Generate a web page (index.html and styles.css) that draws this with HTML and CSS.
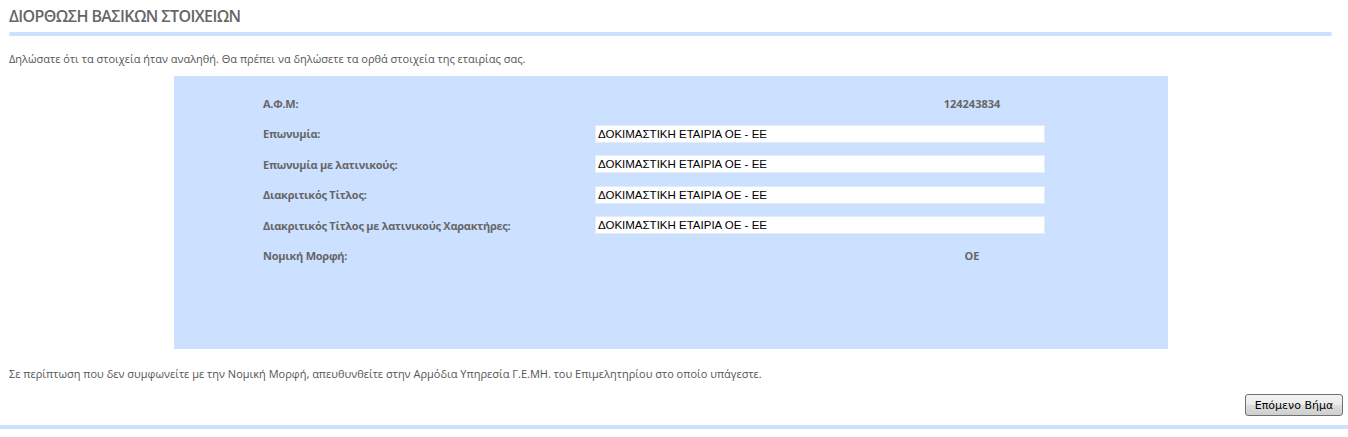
FILE: index.html
```html
<!DOCTYPE html>
<html>
<head>
    <meta charset="utf-8">
    <title>Διόρθωση Βασικών Στοιχείων</title>
    <link rel="stylesheet" href="styles.css">
</head>
<body>
    <div class="page">
        <h1 class="page-title">ΔΙΟΡΘΩΣΗ ΒΑΣΙΚΩΝ ΣΤΟΙΧΕΙΩΝ</h1>
        <div class="title-rule"></div>

        <p class="note intro">Δηλώσατε ότι τα στοιχεία ήταν αναληθή. Θα πρέπει να δηλώσετε τα ορθά στοιχεία της εταιρίας σας.</p>

        <div class="form-box">
            <div class="form-row">
                <label class="form-label">Α.Φ.Μ:</label>
                <span class="static-value">124243834</span>
            </div>
            <div class="form-row">
                <label class="form-label" for="name">Επωνυμία:</label>
                <input class="form-input" id="name" type="text" value="ΔΟΚΙΜΑΣΤΙΚΗ ΕΤΑΙΡΙΑ ΟΕ - ΕΕ">
            </div>
            <div class="form-row">
                <label class="form-label" for="nameLatin">Επωνυμία με λατινικούς:</label>
                <input class="form-input" id="nameLatin" type="text" value="ΔΟΚΙΜΑΣΤΙΚΗ ΕΤΑΙΡΙΑ ΟΕ - ΕΕ">
            </div>
            <div class="form-row">
                <label class="form-label" for="title">Διακριτικός Τίτλος:</label>
                <input class="form-input" id="title" type="text" value="ΔΟΚΙΜΑΣΤΙΚΗ ΕΤΑΙΡΙΑ ΟΕ - ΕΕ">
            </div>
            <div class="form-row">
                <label class="form-label" for="titleLatin">Διακριτικός Τίτλος με λατινικούς Χαρακτήρες:</label>
                <input class="form-input" id="titleLatin" type="text" value="ΔΟΚΙΜΑΣΤΙΚΗ ΕΤΑΙΡΙΑ ΟΕ - ΕΕ">
            </div>
            <div class="form-row">
                <label class="form-label">Νομική Μορφή:</label>
                <span class="static-value">ΟΕ</span>
            </div>
        </div>

        <p class="note outro">Σε περίπτωση που δεν συμφωνείτε με την Νομική Μορφή, απευθυνθείτε στην Αρμόδια Υπηρεσία Γ.Ε.ΜΗ. του Επιμελητηρίου στο οποίο υπάγεστε.</p>

        <div class="actions">
            <button class="next-button" type="button">Επόμενο Βήμα</button>
        </div>
    </div>
    <div class="bottom-rule"></div>
</body>
</html>
```

FILE: styles.css
```css
body {
    margin: 0;
    padding: 0;
    background-color: #fff;
    font-family: 'Open Sans', 'Noto Sans', sans-serif;
    color: #555;
}

.page {
    padding: 0 5px 0 9px;
}

.page-title {
    margin: 0;
    padding-top: 5px;
    font-size: 16px;
    line-height: 22px;
    font-weight: 600;
    color: #666;
    letter-spacing: -0.6px;
}

.title-rule {
    margin-top: 5px;
    width: 1323px;
    height: 4px;
    border-radius: 2px;
    background-color: #cce0ff;
}

.note {
    margin: 0;
    font-size: 11px;
    line-height: 16px;
    color: #555;
}

.intro {
    padding-top: 15px;
}

.form-box {
    margin: 9px 0 0 165px;
    width: 994px;
    height: 273px;
    box-sizing: border-box;
    padding-top: 12px;
    background-color: #cce0ff;
}

.form-row {
    display: flex;
    align-items: center;
    height: 30.5px;
}

.form-label {
    width: 332px;
    padding-left: 89px;
    font-size: 11px;
    font-weight: 700;
    letter-spacing: -0.25px;
    color: #666;
}

.form-input {
    width: 450px;
    height: 18px;
    box-sizing: border-box;
    margin: 0;
    padding: 0 2px;
    border: 1px solid #e3ecf7;
    background-color: #fff;
    font-family: 'Liberation Sans', Arial, sans-serif;
    font-size: 11.5px;
    color: #000;
}

.static-value {
    width: 354px;
    margin-left: 200px;
    text-align: center;
    font-size: 11px;
    font-weight: 700;
    color: #666;
}

.outro {
    padding-top: 17px;
}

.actions {
    display: flex;
    justify-content: flex-end;
    padding-top: 12px;
}

.next-button {
    height: 22px;
    width: 98px;
    padding: 0 4px;
    border: 1px solid #707070;
    border-radius: 3px;
    background: linear-gradient(#f2f2f2 0%, #ebebeb 50%, #dddddd 51%, #cfcfcf 100%);
    font-family: 'DejaVu Sans', Tahoma, sans-serif;
    font-size: 11px;
    color: #000;
}

.bottom-rule {
    margin-top: 9px;
    height: 4px;
    background-color: #cce0ff;
}
```
